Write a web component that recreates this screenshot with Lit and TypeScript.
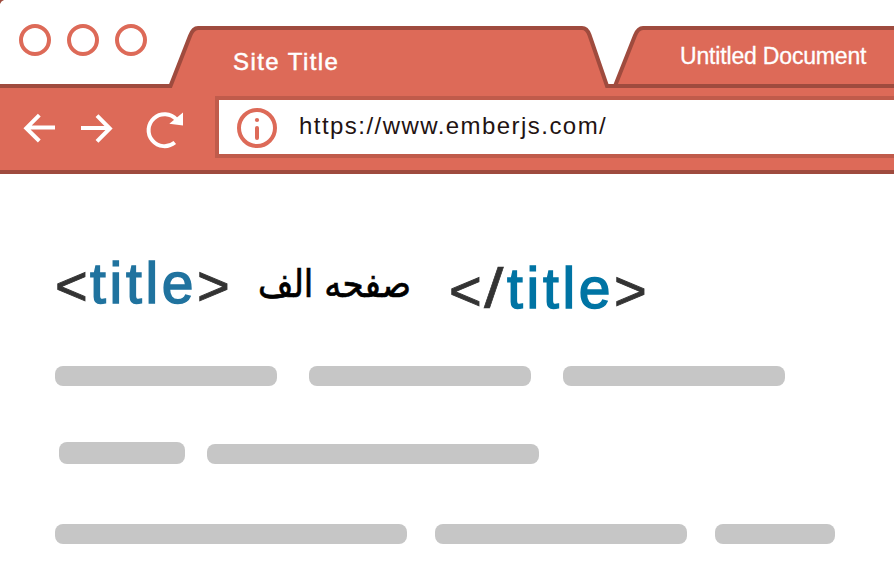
import { LitElement, html, css } from "lit";
import { customElement } from "lit/decorators.js";

@customElement("app-root")
export class AppRoot extends LitElement {
  static styles = css`
    :host {
      display: block;
      height: 586px;
      overflow: hidden;
      background: #fff;
      font-family: "Liberation Sans", Arial, sans-serif;
    }
    .chrome {
      position: relative;
      height: 174px;
      overflow: hidden;
      display: flex;
      flex-direction: column;
    }
    .frame {
      position: absolute;
      inset: 0;
    }
    svg {
      display: block;
      flex: none;
    }
    .strip,
    .toolbar {
      position: relative;
      display: flex;
      flex: none;
    }
    .strip {
      height: 88px;
    }
    .lights {
      padding: 24px 0 0 19px;
      width: 233px;
      box-sizing: border-box;
    }
    .tab {
      color: #fff;
      white-space: nowrap;
    }
    .active {
      width: 447px;
      padding-top: 48px;
      font-size: 24px;
      line-height: 28px;
      letter-spacing: 1.42px;
      -webkit-text-stroke: 0.5px #fff;
    }
    .second {
      padding-top: 43px;
      font-size: 23px;
      line-height: 27px;
      letter-spacing: -0.17px;
      -webkit-text-stroke: 0.3px #fff;
    }
    .toolbar {
      height: 82px;
      padding-top: 8px;
      box-sizing: border-box;
    }
    .nav {
      padding-top: 12px;
      width: 215px;
    }
    .address {
      flex: 1;
      box-sizing: border-box;
      height: 62px;
      display: flex;
      border: 4px solid #c05b4b;
      border-right: 0;
      background: #fff;
      padding: 8px 0 0 18px;
      color: #231312;
      font-size: 24px;
      line-height: 38px;
      letter-spacing: 1.45px;
    }
    .url {
      margin-left: 22px;
      margin-top: -1px;
    }
    .content {
      padding: 77px 55px 0;
    }
    .heading {
      display: flex;
      height: 115px;
      white-space: nowrap;
      font-size: 56px;
      line-height: 64px;
      color: #333;
    }
    .tag {
      display: flex;
      -webkit-text-stroke: 1.2px currentColor;
    }
    .open {
      width: 203px;
    }
    .close {
      margin-top: 5px;
    }
    .mark {
      width: 35px;
      margin-top: 3px;
      -webkit-text-stroke: 0.9px currentColor;
    }
    .slash {
      width: 23px;
      transform: scaleX(1.25);
      transform-origin: left;
      -webkit-text-stroke: 0.6px currentColor;
    }
    .name {
      color: #20739f;
      letter-spacing: 3.7px;
      font-size: 57px;
      width: 107px;
      -webkit-text-stroke: 1.5px currentColor;
    }
    .close .name {
      color: #0074a4;
    }
    .page {
      color: #000;
      width: 191px;
      margin-top: 1px;
      font-family: "DejaVu Sans", sans-serif;
      font-size: 38px;
      direction: rtl;
      text-align: left;
      -webkit-text-stroke: 0.7px #000;
    }
    .page span {
      display: inline-block;
      transform: scaleX(0.9);
      transform-origin: left;
    }
    .row {
      display: flex;
      align-items: flex-end;
      height: 20px;
    }
    .row + .row {
      margin-top: 58px;
    }
    .row + .row + .row {
      margin-top: 60px;
    }
    .bar {
      height: 20px;
      border-radius: 8px;
      background: #c6c6c6;
      flex: none;
    }
    .a { width: 222px; margin-right: 32px; }
    .b { width: 126px; height: 22px; margin: 0 22px 0 4px; }
    .c { width: 332px; }
    .d { width: 352px; margin-right: 28px; }
    .e { width: 252px; margin-right: 28px; }
    .f { width: 120px; }
  `;

  render() {
    return html`
      <header class="chrome">
        <svg class="frame" width="894" height="174" viewBox="0 0 894 174" fill="#dd6a58" stroke="#9f4b3e" stroke-width="4">
          <path d="M615 86L635 35.500Q638 28 643 28H900V86Z" />
          <path d="M-10 86H170.500L190 36Q193 28 198 28H582Q587 28 589.500 35L607 86H900V172H-10Z" />
          <path d="M0 0H4Q1 1 0 4Z" fill="#9f4b3e" stroke="none" />
        </svg>
        <div class="strip">
          <div class="lights">
            <svg width="128" height="32" viewBox="0 0 128 32" fill="none" stroke="#dd6a58" stroke-width="4">
              <circle cx="16" cy="16" r="14" />
              <circle cx="64" cy="16" r="14" />
              <circle cx="112" cy="16" r="14" />
            </svg>
          </div>
          <div class="tab active">Site Title</div>
          <div class="tab second">Untitled Document</div>
        </div>
        <div class="toolbar">
          <div class="nav">
            <svg width="200" height="44" viewBox="0 108 200 44" fill="none" stroke="#fff" stroke-width="4">
              <path d="M55 127.500H27M39.300 115.200L26.300 128.200L39.300 141" />
              <path d="M81 128H110M97 115.700L109.800 128.500L97 141.300" />
              <path d="M174.800 142.500A16 16 0 1 1 176.500 119.500" />
              <path d="M183 112.500V125.600L169.300 123.800Z" fill="#fff" stroke="none" />
            </svg>
          </div>
          <div class="address">
            <svg width="40" height="40" viewBox="0 0 40 40" fill="none" stroke="#dd6a58" stroke-width="4">
              <circle cx="20" cy="20" r="18" />
              <circle cx="20" cy="12" r="2.100" fill="#dd6a58" stroke="none" />
              <path d="M20 20V30" stroke-linecap="round" />
            </svg>
            <span class="url">https://www.emberjs.com/</span>
          </div>
        </div>
      </header>
      <main class="content">
        <div class="heading">
          <div class="tag open"><span class="mark">&lt;</span><span class="name">title</span><span class="mark">&gt;</span></div>
          <div class="page" lang="fa"><span>صفحه الف</span></div>
          <div class="tag close"><span class="mark">&lt;</span><span class="slash">/</span><span class="name">title</span><span class="mark">&gt;</span></div>
        </div>
        <div class="row"><i class="bar a"></i><i class="bar a"></i><i class="bar a"></i></div>
        <div class="row"><i class="bar b"></i><i class="bar c"></i></div>
        <div class="row"><i class="bar d"></i><i class="bar e"></i><i class="bar f"></i></div>
      </main>
    `;
  }
}
